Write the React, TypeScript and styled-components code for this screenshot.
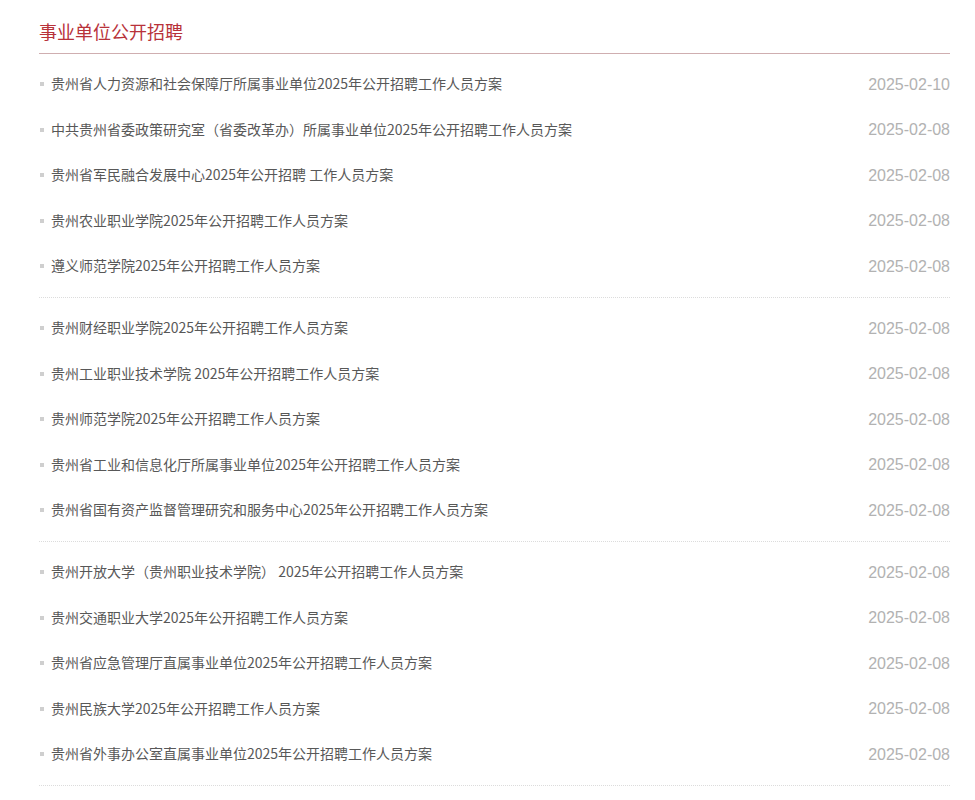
import React from 'react';
import styled, { createGlobalStyle } from 'styled-components';

const GlobalStyle = createGlobalStyle`
    body {
        margin: 0;
        background: #fff;
        font-family: "Noto Sans CJK SC", "Noto Sans", sans-serif;
    }
`;

const Wrapper = styled.div`
    width: 911px;
    padding-left: 39px;
`;

const Header = styled.div`
    padding: 19px 0 10px;
    border-bottom: 1px solid #cfaeb0;

    h2 {
        margin: 0;
        font-size: 18px;
        line-height: 24px;
        font-weight: 400;
        color: #b8323a;
    }
`;

const Group = styled.ul`
    list-style: none;
    margin: 0;
    padding: 8px 0 7.5px;
    border-bottom: 1px dotted #dcdcdc;
`;

const Row = styled.li`
    display: flex;
    justify-content: space-between;
    align-items: center;
    height: 45.5px;

    a {
        display: flex;
        align-items: center;
        margin-top: -3px;
        font-size: 14px;
        line-height: 20px;
        color: #585858;
        text-decoration: none;

        &::before {
            content: '';
            width: 4px;
            height: 4px;
            margin: 2px 7px 0 1px;
            background: #cfcfcf;
        }
    }

    span {
        font-family: "Liberation Sans", sans-serif;
        font-size: 16px;
        color: #b2b2b2;
    }
`;

const groups = [
    [
        ['贵州省人力资源和社会保障厅所属事业单位2025年公开招聘工作人员方案', '2025-02-10'],
        ['中共贵州省委政策研究室（省委改革办）所属事业单位2025年公开招聘工作人员方案', '2025-02-08'],
        ['贵州省军民融合发展中心2025年公开招聘 工作人员方案', '2025-02-08'],
        ['贵州农业职业学院2025年公开招聘工作人员方案', '2025-02-08'],
        ['遵义师范学院2025年公开招聘工作人员方案', '2025-02-08'],
    ],
    [
        ['贵州财经职业学院2025年公开招聘工作人员方案', '2025-02-08'],
        ['贵州工业职业技术学院 2025年公开招聘工作人员方案', '2025-02-08'],
        ['贵州师范学院2025年公开招聘工作人员方案', '2025-02-08'],
        ['贵州省工业和信息化厅所属事业单位2025年公开招聘工作人员方案', '2025-02-08'],
        ['贵州省国有资产监督管理研究和服务中心2025年公开招聘工作人员方案', '2025-02-08'],
    ],
    [
        ['贵州开放大学（贵州职业技术学院） 2025年公开招聘工作人员方案', '2025-02-08'],
        ['贵州交通职业大学2025年公开招聘工作人员方案', '2025-02-08'],
        ['贵州省应急管理厅直属事业单位2025年公开招聘工作人员方案', '2025-02-08'],
        ['贵州民族大学2025年公开招聘工作人员方案', '2025-02-08'],
        ['贵州省外事办公室直属事业单位2025年公开招聘工作人员方案', '2025-02-08'],
    ],
];

export default function App() {
    return (
        <Wrapper>
            <GlobalStyle />
            <Header>
                <h2>事业单位公开招聘</h2>
            </Header>
            {groups.map((items, g) => (
                <Group key={g}>
                    {items.map(([title, date], i) => (
                        <Row key={i}>
                            <a href="#">{title}</a>
                            <span>{date}</span>
                        </Row>
                    ))}
                </Group>
            ))}
        </Wrapper>
    );
}
